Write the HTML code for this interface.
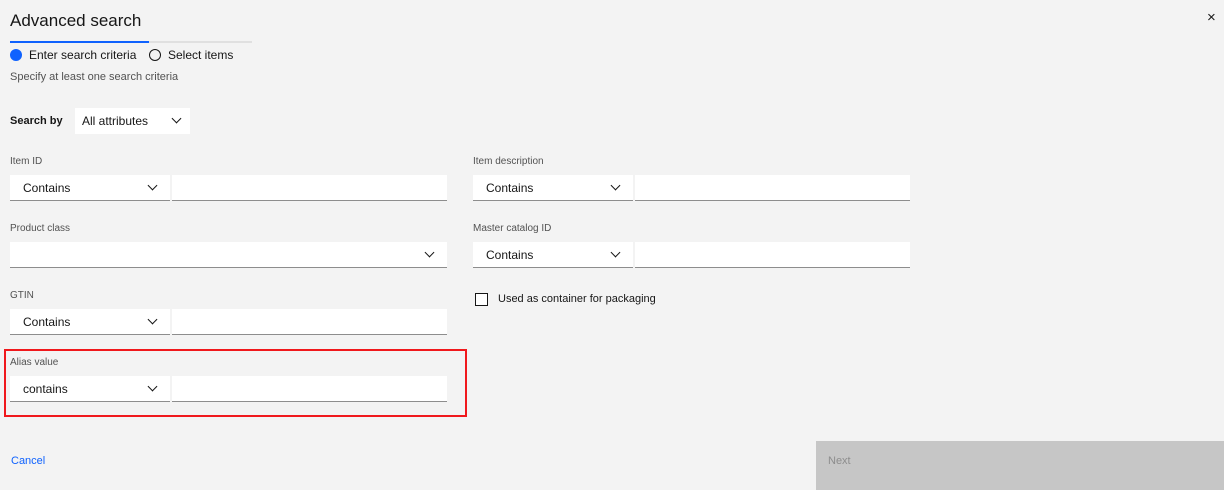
<!DOCTYPE html><html><head><style>
body{margin:0;width:1224px;height:490px;background:#f3f3f3;font-family:"Liberation Sans",sans-serif;position:relative;overflow:hidden;color:#161616}
.a{position:absolute}
.lbl{font-size:10px;color:#525252}
.sel{position:absolute;background:#fff;border-bottom:1px solid #8d8d8d;height:24px;font-size:12px;line-height:26px;box-sizing:border-box;padding-left:13px}
.chev{position:absolute;right:14px;top:7px;width:6px;height:6px;border-right:1px solid #161616;border-bottom:1px solid #161616;transform:rotate(45deg)}
.inp{position:absolute;background:#fff;border-bottom:1px solid #8d8d8d;height:25px;box-sizing:border-box}
</style></head><body>
<div class="a" style="left:10px;top:11px;font-size:17px;color:#161616">Advanced search</div>
<div class="a" style="left:1207px;top:9px;font-size:15px">×</div>
<div class="a" style="left:10px;top:41px;width:242px;height:2px;background:#e0e0e0"></div>
<div class="a" style="left:10px;top:41px;width:139px;height:2px;background:#0f62fe"></div>
<div class="a" style="left:10px;top:49px;width:12px;height:12px;border-radius:50%;background:#0f62fe"></div>
<div class="a" style="left:29px;top:48px;font-size:12px">Enter search criteria</div>
<div class="a" style="left:149px;top:49px;width:10px;height:10px;border-radius:50%;border:1px solid #161616"></div>
<div class="a" style="left:168px;top:48px;font-size:12px">Select items</div>
<div class="a" style="left:10px;top:71px;font-size:11px;color:#525252">Specify at least one search criteria</div>
<div class="a" style="left:10px;top:115px;font-size:11px;font-weight:bold">Search by</div>
<div class="sel" style="left:75px;top:108px;width:115px;height:26px;line-height:26px;border:none;padding-left:7px">All attributes<div class="chev" style="right:10px"></div></div>

<div class="a lbl" style="left:10px;top:156px">Item ID</div>
<div class="sel" style="left:10px;top:175px;width:160px;height:26px">Contains<div class="chev"></div></div>
<div class="inp" style="left:172px;top:175px;width:275px;height:26px"></div>
<div class="a lbl" style="left:473px;top:156px">Item description</div>
<div class="sel" style="left:473px;top:175px;width:160px;height:26px">Contains<div class="chev"></div></div>
<div class="inp" style="left:635px;top:175px;width:275px;height:26px"></div>

<div class="a lbl" style="left:10px;top:223px">Product class</div>
<div class="sel" style="left:10px;top:242px;width:437px;height:26px"><div class="chev"></div></div>
<div class="a lbl" style="left:473px;top:223px">Master catalog ID</div>
<div class="sel" style="left:473px;top:242px;width:160px;height:26px">Contains<div class="chev"></div></div>
<div class="inp" style="left:635px;top:242px;width:275px;height:26px"></div>

<div class="a lbl" style="left:10px;top:290px">GTIN</div>
<div class="sel" style="left:10px;top:309px;width:160px;height:26px">Contains<div class="chev"></div></div>
<div class="inp" style="left:172px;top:309px;width:275px;height:26px"></div>
<div class="a" style="left:475px;top:293px;width:11px;height:11px;border:1px solid #161616;background:#fff"></div>
<div class="a" style="left:498px;top:293px;font-size:11px">Used as container for packaging</div>

<div class="a" style="left:4px;top:349px;width:459px;height:64px;border:2px solid #f0181c"></div>
<div class="a lbl" style="left:10px;top:357px">Alias value</div>
<div class="sel" style="left:10px;top:376px;width:160px;height:26px">contains<div class="chev"></div></div>
<div class="inp" style="left:172px;top:376px;width:275px;height:26px"></div>

<div class="a" style="left:11px;top:455px;font-size:11px;color:#0f62fe">Cancel</div>
<div class="a" style="left:816px;top:441px;width:408px;height:49px;background:#c6c6c6"></div>
<div class="a" style="left:828px;top:455px;font-size:11px;color:#8d8d8d">Next</div>
</body></html>
